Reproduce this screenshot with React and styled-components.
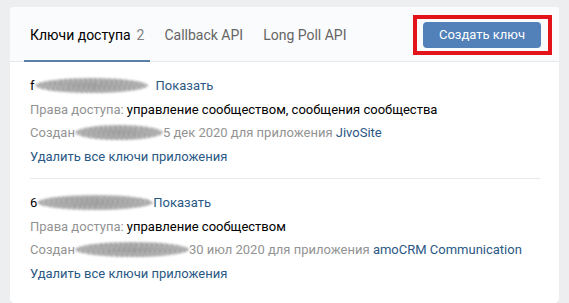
import React from 'react';
import styled, { createGlobalStyle } from 'styled-components';

const GlobalStyle = createGlobalStyle`
  html, body {
    margin: 0;
    padding: 0;
    background: #edeef0;
    font-family: Roboto, "Open Sans", "DejaVu Sans", sans-serif;
    -webkit-font-smoothing: antialiased;
  }
`;

const Page = styled.div`
  padding: 7px 10px 8px 10px;
`;

const Card = styled.div`
  background: #fff;
  border-radius: 4px;
  box-shadow: 0 1px 0 0 #dce1e6;
  overflow: hidden;
`;

const Header = styled.div`
  display: flex;
  align-items: stretch;
  justify-content: space-between;
  height: 54px;
  padding: 0 6px 0 14px;
  background: #fafbfc;
  border-bottom: 1px solid #e7e8ec;
`;

const Tabs = styled.div`
  display: flex;
`;

const Tab = styled.div`
  display: flex;
  align-items: center;
  padding: 0 6px 0 6px;
  margin-right: 8px;
  font-size: 14px;
  color: ${p => (p.active ? '#000' : '#656565')};
  box-shadow: ${p => (p.active ? 'inset 0 -2px 0 #5b7fa6' : 'none')};
  margin-bottom: -1px;
`;

const Count = styled.span`
  color: #828282;
  margin-left: 6px;
`;

const Highlight = styled.div`
  align-self: center;
  border: 4px solid #e3131c;
  padding: 3px 7px 3px 6px;
  margin-top: 1px;
  margin-right: 1px;
`;

const Button = styled.button`
  display: block;
  width: 118px;
  height: 26px;
  border: 0;
  border-radius: 4px;
  background: #5181b8;
  color: #fff;
  font-family: inherit;
  font-size: 13px;
  padding: 0;
`;

const List = styled.div`
  padding: 10px 19px 8px 20px;
`;

const Key = styled.div`
  padding-bottom: 10px;
  border-top: ${p => (p.first ? 'none' : '1px solid #e7e8ec')};
  padding-top: ${p => (p.first ? '2px' : '12px')};
`;

const Line = styled.div`
  display: flex;
  align-items: center;
  height: 23.5px;
  font-size: 13px;
  color: #000;
  white-space: nowrap;
`;

const Muted = styled.span`
  color: #939393;
`;

const Link = styled.span`
  color: #2a5885;
`;

const Plain = styled.span`
  color: #000;
`;

const Blur = styled.span`
  display: inline-block;
  width: ${p => p.w}px;
  height: 15px;
  margin: 0 ${p => p.gap || 0}px 0 0;
  border-radius: 50%;
  background:
    repeating-linear-gradient(37deg, rgba(255,255,255,0.55) 0 1px, transparent 1px 3px),
    repeating-linear-gradient(-53deg, rgba(60,60,60,0.4) 0 1px, transparent 1px 2px),
    radial-gradient(ellipse at center, #8e8e8e 0%, #a8a8a8 60%, #c8c8c8 100%);
  filter: blur(1.2px);
  opacity: 0.9;
`;

const keys = [
  {
    first: 'f',
    blur: 113,
    rights: 'управление сообществом, сообщения сообщества',
    createdBlur: 88,
    date: '5 дек 2020',
    app: 'JivoSite',
    showGap: 8,
  },
  {
    first: '6',
    blur: 116,
    rights: 'управление сообществом',
    createdBlur: 114,
    date: '30 июл 2020',
    app: 'amoCRM Communication',
    showGap: 0,
  },
];

export default function App() {
  return (
    <>
      <GlobalStyle />
      <Page>
        <Card>
          <Header>
            <Tabs>
              <Tab active>
                Ключи доступа<Count>2</Count>
              </Tab>
              <Tab>Callback API</Tab>
              <Tab>Long Poll API</Tab>
            </Tabs>
            <Highlight>
              <Button>Создать ключ</Button>
            </Highlight>
          </Header>
          <List>
            {keys.map((k, i) => (
              <Key key={i} first={i === 0}>
                <Line>
                  <Plain>{k.first}</Plain>
                  <Blur w={k.blur} gap={k.showGap} />
                  <Link>Показать</Link>
                </Line>
                <Line>
                  <Muted>Права доступа:&nbsp;</Muted>
                  <Plain>{k.rights}</Plain>
                </Line>
                <Line>
                  <Muted>Создан</Muted>
                  <Blur w={k.createdBlur} />
                  <Muted>{k.date} для приложения&nbsp;</Muted>
                  <Link>{k.app}</Link>
                </Line>
                <Line>
                  <Link>Удалить все ключи приложения</Link>
                </Line>
              </Key>
            ))}
          </List>
        </Card>
      </Page>
    </>
  );
}
